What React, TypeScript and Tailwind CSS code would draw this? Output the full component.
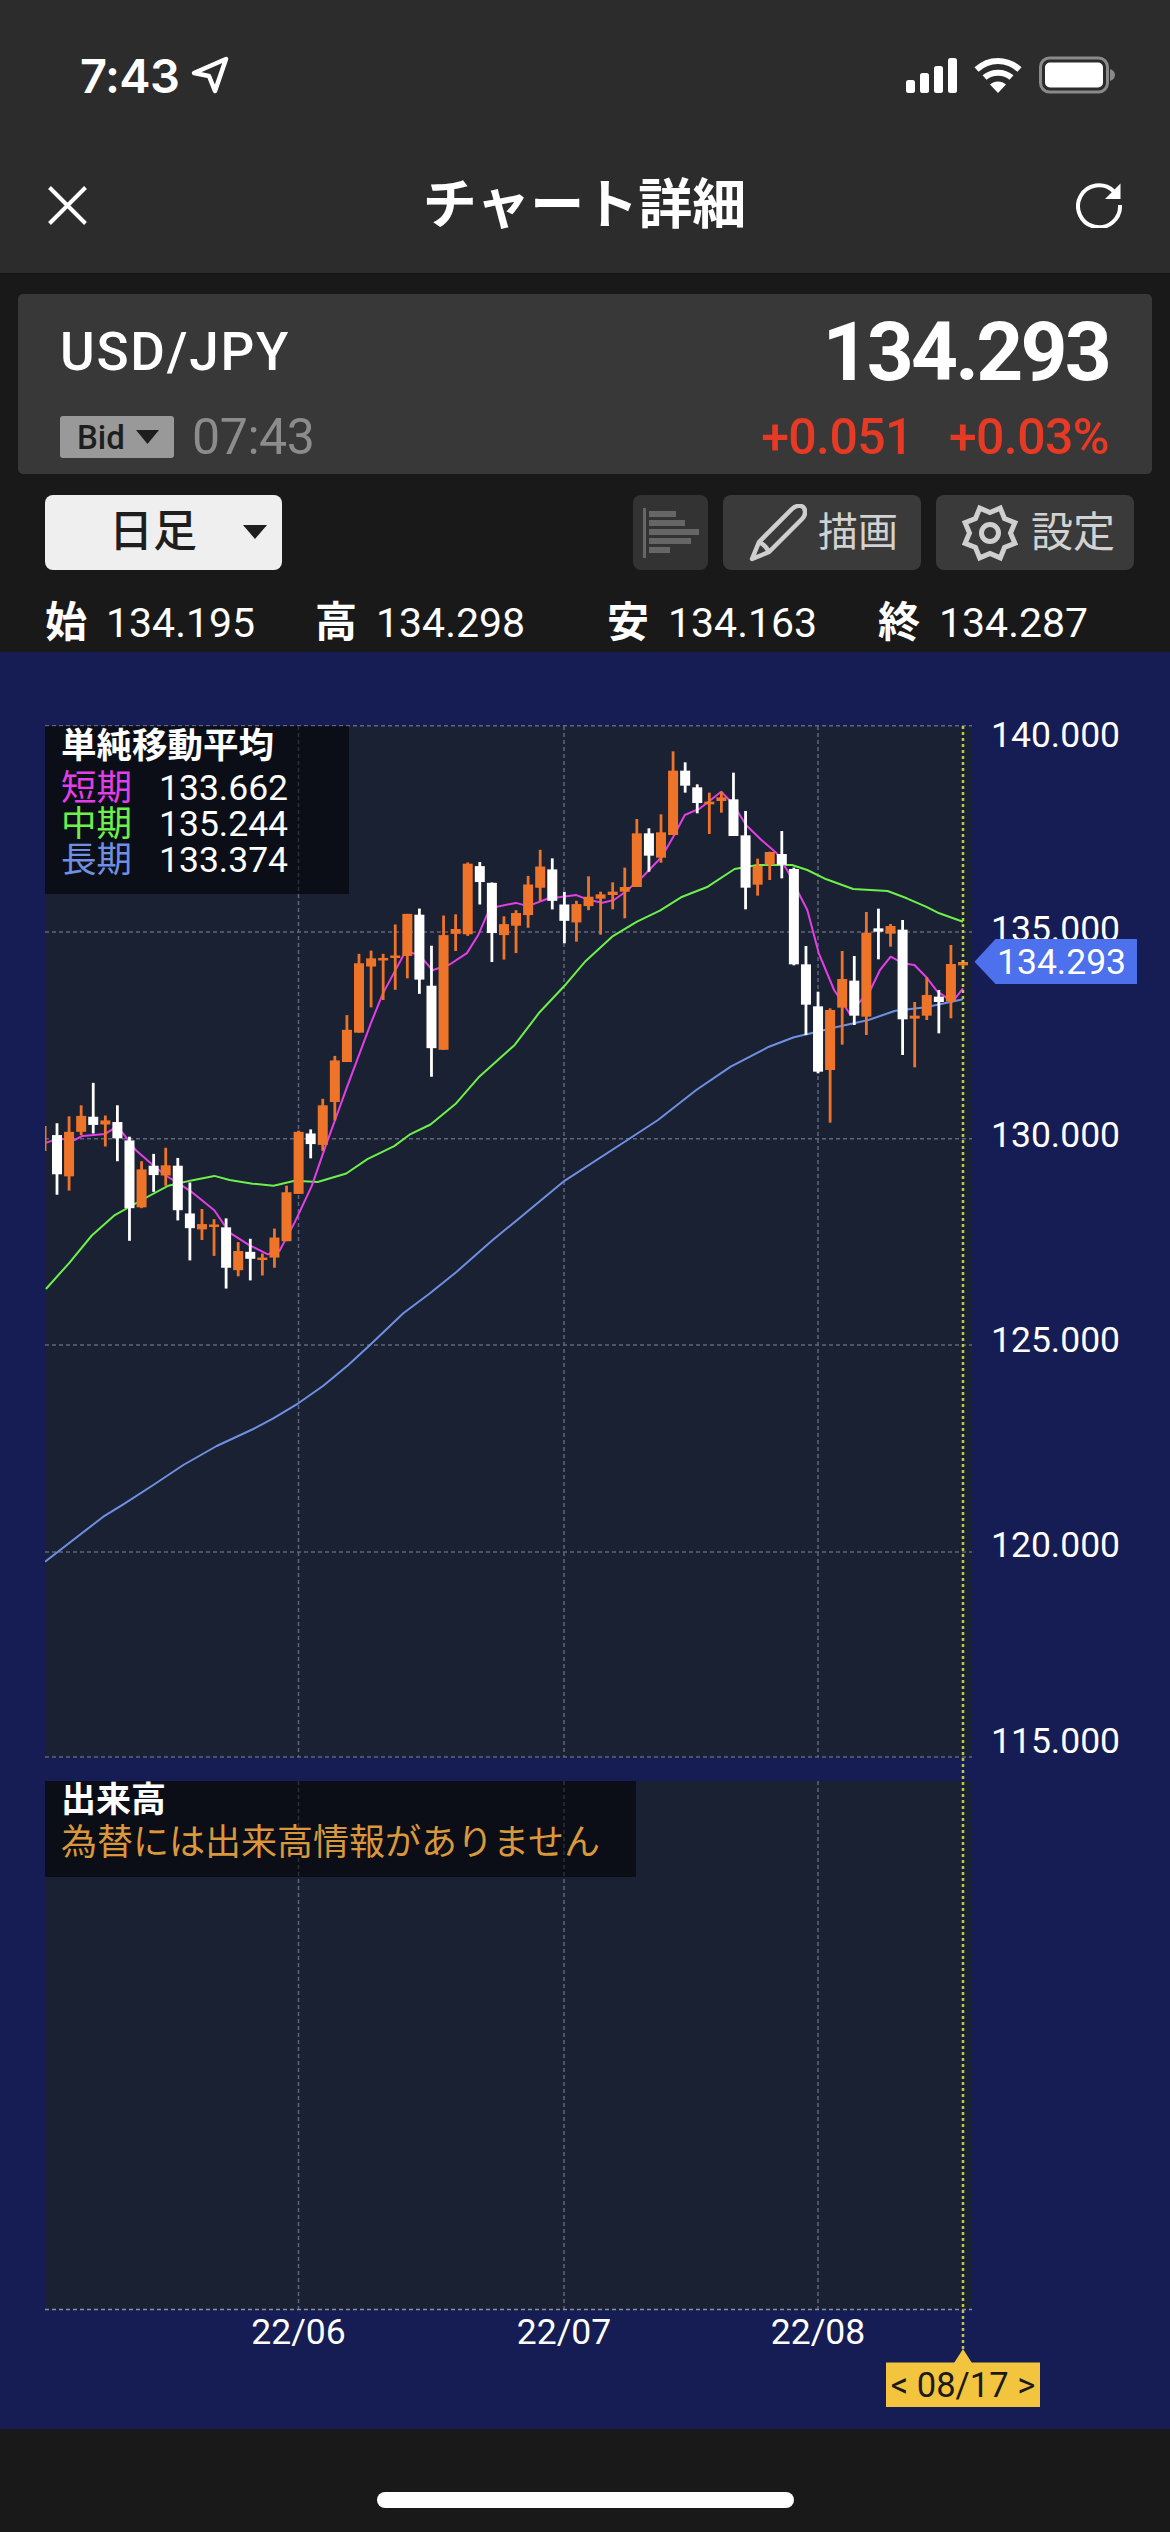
type Pt = [number, number];
// high, body top, body bottom, low, isUp (orange)
type Candle = [number, number, number, number, 0 | 1];

// read off the left part of the chart, scaled below
const leftCandles: Candle[] = [
  [1037, 1066, 1162, 1212, 0], [1020, 1058, 1167, 1202, 1], [993, 1019, 1058, 1066, 1], [938, 1021, 1041, 1062, 0],
  [1018, 1030, 1040, 1094, 1], [993, 1034, 1074, 1130, 0], [1070, 1079, 1245, 1325, 0], [1130, 1150, 1243, 1245, 1],
  [1112, 1141, 1164, 1205, 0], [1097, 1140, 1165, 1190, 1], [1122, 1141, 1250, 1275, 0], [1182, 1258, 1294, 1373, 0],
  [1247, 1284, 1297, 1323, 1], [1272, 1285, 1290, 1362, 1], [1270, 1292, 1391, 1442, 0], [1328, 1350, 1397, 1412, 1],
  [1320, 1352, 1369, 1422, 0], [1356, 1366, 1369, 1410, 1], [1295, 1317, 1366, 1391, 1], [1190, 1206, 1326, 1326, 1],
  [1055, 1058, 1210, 1210, 1], [1052, 1062, 1088, 1123, 0], [977, 993, 1090, 1105, 1], [872, 883, 985, 1030, 1],
  [772, 808, 887, 887, 1], [622, 645, 815, 815, 1], [614, 633, 653, 753, 1], [622, 632, 636, 735, 1],
  [550, 626, 631, 710, 1], [524, 524, 627, 682, 1], [511, 526, 685, 720, 0], [602, 700, 853, 923, 0],
  [528, 576, 857, 857, 1], [525, 561, 573, 615, 1], [398, 401, 574, 578, 1], [397, 407, 446, 501, 0],
  [447, 448, 571, 642, 0], [530, 549, 576, 636, 1], [515, 522, 553, 620, 1], [431, 452, 527, 558, 1],
  [367, 408, 460, 492, 1], [388, 415, 492, 513, 0], [470, 501, 541, 596, 0], [492, 500, 545, 592, 1],
  [432, 482, 505, 515, 1],
];

const rightCandles: Candle[] = [
  [575, 583, 596, 704, 1], [547, 575, 585, 628, 1], [503, 561, 575, 655, 1], [357, 400, 561, 561, 1],
  [385, 400, 467, 515, 0], [343, 397, 473, 488, 1], [154, 212, 405, 405, 1], [187, 212, 257, 278, 0],
  [253, 262, 309, 340, 0], [278, 305, 313, 402, 1], [275, 292, 303, 338, 1], [218, 298, 408, 408, 0],
  [333, 406, 563, 628, 0], [476, 498, 554, 587, 1], [455, 456, 494, 540, 1], [393, 462, 494, 535, 0],
  [503, 507, 793, 796, 0], [738, 793, 914, 1005, 0], [875, 919, 1115, 1120, 0], [925, 930, 1110, 1268, 1],
  [753, 837, 923, 1034, 1], [768, 842, 947, 975, 0], [636, 698, 950, 1005, 1], [626, 685, 695, 778, 0],
  [672, 678, 701, 740, 1], [660, 689, 958, 1065, 0], [906, 947, 956, 1102, 1], [832, 885, 947, 960, 1],
  [870, 890, 906, 1000, 0], [735, 792, 905, 955, 1], [780, 786, 796, 800, 1],
];

const scaleL = (y: number) => 700 + y / 2.45;
const scaleR = (y: number) => 700 + y / 3;
const L = (pts: Pt[]): Pt[] => pts.map(([x, y]) => [x / 2.613, scaleL(y)]);
const R = (pts: Pt[]): Pt[] => pts.map(([x, y]) => [570 + x / 2.613, scaleR(y)]);

const candles = [
  ...leftCandles.map((c) => [c[0], c[1], c[2], c[3]].map(scaleL).concat(c[4])),
  ...rightCandles.map((c) => [c[0], c[1], c[2], c[3]].map(scaleR).concat(c[4])),
];

const shortMa: Pt[] = [
  ...L([[120, 1085], [150, 1075], [195, 1078], [215, 1068], [275, 1063], [300, 1048], [320, 1060], [355, 1103], [400, 1140], [433, 1165], [465, 1183], [500, 1205], [560, 1250], [600, 1305], [650, 1335], [700, 1358], [730, 1350], [770, 1280], [815, 1190], [850, 1095], [906, 950], [970, 790], [1000, 720], [1060, 615], [1096, 625], [1130, 662], [1175, 648], [1220, 620], [1250, 575], [1280, 510], [1348, 497], [1380, 505], [1430, 487], [1506, 478]]),
  ...R([[50, 600], [85, 608], [115, 600], [145, 575], [190, 530], [240, 470], [270, 410], [300, 345], [340, 325], [395, 275], [425, 310], [460, 375], [500, 420], [540, 460], [570, 515], [600, 585], [620, 630], [650, 760], [690, 870], [730, 940], [785, 870], [810, 810], [838, 770], [870, 790], [900, 795], [930, 830], [960, 875], [1000, 905], [1027, 865]]),
];

const midMa: Pt[] = [
  ...L([[120, 1443], [180, 1380], [240, 1312], [300, 1262], [380, 1220], [440, 1190], [500, 1177], [560, 1166], [600, 1176], [660, 1185], [715, 1190], [770, 1178], [830, 1181], [905, 1160], [960, 1125], [1030, 1093], [1070, 1065], [1125, 1040], [1190, 990], [1250, 925], [1345, 845], [1410, 765], [1480, 695], [1530, 640]]),
  ...R([[110, 710], [175, 665], [235, 632], [290, 592], [360, 560], [430, 507], [490, 495], [580, 495], [620, 510], [670, 538], [740, 567], [830, 573], [880, 595], [930, 620], [965, 640], [1027, 665]]),
];

const longMa: Pt[] = [
  ...([[15, 965], [190, 830], [250, 793], [340, 735], [430, 675], [530, 618], [640, 567], [700, 535], [775, 490], [850, 437], [925, 375], [990, 315], [1090, 220], [1170, 160], [1250, 95]] as Pt[]).map(([x, y]): Pt => [40 + x / 3, 1240 + y / 3]),
  ...L([[1285, 1325], [1350, 1275], [1475, 1178]]),
  ...R([[150, 1320], [230, 1260], [330, 1170], [420, 1100], [520, 1040], [585, 1012], [630, 1000], [700, 980], [780, 960], [850, 932], [930, 922], [1027, 898]]),
];

const toPoints = (pts: Pt[]) => pts.map(([x, y]) => `${x.toFixed(1)},${y.toFixed(1)}`).join(' ');

const priceGrid = [725.7, 932, 1138.8, 1345, 1552, 1757];
const dateGrid = [298.5, 564, 818];
const axisLabels = [
  { y: 747, text: '140.000' },
  { y: 941, text: '135.000' },
  { y: 1147, text: '130.000' },
  { y: 1352, text: '125.000' },
  { y: 1557, text: '120.000' },
  { y: 1753, text: '115.000' },
];
const ohlc = [
  { label: '始', value: '134.195' },
  { label: '高', value: '134.298' },
  { label: '安', value: '134.163' },
  { label: '終', value: '134.287' },
];
const maRows = [
  { label: '短期', value: '133.662', color: 'text-[#e23fe6]' },
  { label: '中期', value: '135.244', color: 'text-[#6ef04b]' },
  { label: '長期', value: '133.374', color: 'text-[#6f90e2]' },
];

function StatusBar() {
  return (
    <div className="flex h-[150px] items-center justify-between pl-[80px] pr-[55px]">
      <div className="flex items-center gap-[12px]">
        <span className="font-['Inter',sans-serif] text-[47px] leading-none font-semibold tracking-[-0.6px] text-white">7:43</span>
        <svg width="38" height="38" viewBox="0 0 38 38" fill="none" stroke="white" strokeWidth="4.5" strokeLinejoin="round">
          <path d="M3 17 L35 3 L24 35 L18 20 Z" />
        </svg>
      </div>
      <div className="flex items-center">
        <svg width="51" height="36" viewBox="0 0 51 36" fill="white">
          <rect x="0" y="23" width="9" height="13" rx="2.5" />
          <rect x="14" y="16" width="9" height="20" rx="2.5" />
          <rect x="28" y="9" width="9" height="27" rx="2.5" />
          <rect x="42" y="1" width="9" height="35" rx="2.5" />
        </svg>
        <svg className="ml-[17px]" width="48" height="36" viewBox="0 0 48 36" fill="none" stroke="white" strokeWidth="6">
          <path d="M2.5 12.5 C15 1 33 1 45.5 12.5" />
          <path d="M10.5 20.5 C18 14 30 14 37.5 20.5" />
          <path d="M24 36 L16 27.5 C20.5 23.5 27.5 23.5 32 27.5 Z" fill="white" stroke="none" />
        </svg>
        <svg className="ml-[17px]" width="76" height="38" viewBox="0 0 76 38" fill="none">
          <rect x="1.5" y="2" width="67" height="34" rx="9" stroke="#8a8a8a" strokeWidth="3" />
          <rect x="6" y="6.5" width="58" height="25" rx="5" fill="white" />
          <path d="M71 13 C74 14 76 16 76 19 C76 22 74 24 71 25 Z" fill="#8a8a8a" />
        </svg>
      </div>
    </div>
  );
}

function NavBar() {
  return (
    <div className="flex h-[110px] items-center justify-between pl-[48px] pr-[48px]">
      <svg width="39" height="39" viewBox="0 0 39 39" stroke="white" strokeWidth="4">
        <path d="M1.5 1.5 L37.5 37.5 M37.5 1.5 L1.5 37.5" />
      </svg>
      <h1 className="ml-[6px] pt-[2px] text-[54px] leading-none font-bold text-white">チャート詳細</h1>
      <svg width="46" height="46" viewBox="0 0 46 46" fill="none">
        <path d="M37.5 9 A21 21 0 1 0 44 23" stroke="white" strokeWidth="4" />
        <path d="M44.5 1.5 V17 H29 Z" fill="white" />
      </svg>
    </div>
  );
}

function PricePanel() {
  return (
    <div className="mx-[18px] mt-[20px] flex h-[180px] flex-col rounded-[5px] bg-[#383838] pl-[42px] pr-[43px]">
      <div className="flex h-[110px] items-center justify-between pt-[6px]">
        <span className="text-[53px] leading-none font-medium tracking-[1.8px] text-white">USD/JPY</span>
        <span className="text-[82px] leading-none font-bold tracking-[-2.8px] text-white">134.293</span>
      </div>
      <div className="flex flex-1 items-center justify-between pb-[4px]">
        <div className="flex items-center">
          <div className="flex h-[42px] w-[114px] items-center rounded-[3px] bg-[#999999] pl-[17px]">
            <span className="text-[33px] leading-none font-medium text-[#1e1e1e]">Bid</span>
            <svg className="ml-[11px]" width="23" height="14" viewBox="0 0 23 14" fill="#1e1e1e"><path d="M0 0 H23 L11.5 14 Z" /></svg>
          </div>
          <span className="ml-[18px] text-[50px] leading-none tracking-[-0.4px] text-[#8c8c8c]">07:43</span>
        </div>
        <div className="flex items-center gap-[36px] text-[50px] leading-none font-medium tracking-[-0.6px] text-[#e63a25]">
          <span>+0.051</span>
          <span>+0.03%</span>
        </div>
      </div>
    </div>
  );
}

function Toolbar() {
  return (
    <div className="mt-[21px] flex h-[75px] pl-[45px] pr-[36px]">
      <div className="relative flex w-[237px] items-center rounded-[8px] bg-[#efefef] pl-[64px]">
        <span className="pb-[2px] text-[44px] leading-none font-medium text-[#1e1e1e]">日足</span>
        <svg className="absolute left-[198px] top-[30px]" width="24" height="14" viewBox="0 0 24 14" fill="#1e1e1e"><path d="M0 0 H24 L12 14 Z" /></svg>
      </div>
      <div className="ml-auto flex gap-[15px]">
        <div className="flex w-[75px] items-center justify-center rounded-[8px] bg-[#333333]">
          <svg width="56" height="50" viewBox="0 0 56 50" fill="#666666">
            <rect x="0" y="0" width="3" height="50" />
            <rect x="6" y="3" width="27" height="6" />
            <rect x="6" y="12" width="36" height="6" />
            <rect x="6" y="21" width="51" height="6" />
            <rect x="6" y="30" width="42" height="6" />
            <rect x="6" y="39" width="21" height="6" />
          </svg>
        </div>
        <div className="flex w-[198px] items-center rounded-[8px] bg-[#3a3a3a] pl-[26px]">
          <svg width="58" height="58" viewBox="0 0 58 58" fill="none" stroke="#cfcfcf" strokeWidth="4.5" strokeLinejoin="round">
            <path d="M3 55 L10 38 L43 5 C47 1 53 1 55 4 C57 8 56 12 53 15 L20 48 Z" />
            <path d="M10 38 C14 40 18 44 20 48" />
          </svg>
          <span className="ml-[11px] text-[40px] leading-none text-[#d2d2d2]">描画</span>
        </div>
        <div className="flex w-[198px] items-center rounded-[8px] bg-[#3a3a3a] pl-[25px]">
          <svg width="58" height="60" viewBox="0 0 58 60" fill="none" stroke="#cfcfcf" strokeWidth="5" strokeLinejoin="miter">
            <path d="M29 9.5 L39.3 5.1 L43.5 15.5 L53.9 19.7 L49.5 30 L53.9 40.3 L43.5 44.5 L39.3 54.9 L29 50.5 L18.7 54.9 L14.5 44.5 L4.1 40.3 L8.5 30 L4.1 19.7 L14.5 15.5 L18.7 5.1 Z" />
            <circle cx="29" cy="30" r="8.5" />
          </svg>
          <span className="ml-[12px] text-[42px] leading-none text-[#d2d2d2]">設定</span>
        </div>
      </div>
    </div>
  );
}

function OhlcRow() {
  return (
    <div className="grid h-[82px] grid-cols-[270px_292px_271px_1fr] items-center pl-[45px] pt-[24px]">
      {ohlc.map((item) => (
        <div key={item.label} className="flex items-center gap-[19px] text-white">
          <span className="text-[42px] leading-none font-bold">{item.label}</span>
          <span className="text-[41px] leading-none">{item.value}</span>
        </div>
      ))}
    </div>
  );
}

function ChartDrawing() {
  return (
    <svg className="absolute left-0 top-0" width="1170" height="1777" viewBox="0 652 1170 1777" fontFamily="Roboto, sans-serif">
      <defs>
        <clipPath id="plot">
          <rect x="45" y="725" width="930" height="1032" />
        </clipPath>
      </defs>
      <g stroke="#5f667b" strokeWidth="1.5" strokeDasharray="4 3">
        {priceGrid.map((y) => (
          <line key={y} x1="45" x2="972" y1={y} y2={y} />
        ))}
        {dateGrid.map((x) => (
          <g key={x}>
            <line x1={x} x2={x} y1="726" y2="1757" />
            <line x1={x} x2={x} y1="1781" y2="2309" />
          </g>
        ))}
        <line x1="45" x2="972" y1="2309.5" y2="2309.5" stroke="#8a90a5" />
      </g>
      <g clipPath="url(#plot)" strokeLinejoin="round">
        <polyline points={toPoints(longMa)} fill="none" stroke="#6f90e2" strokeWidth="2" />
        <polyline points={toPoints(midMa)} fill="none" stroke="#6ef04b" strokeWidth="2" />
        <polyline points={toPoints(shortMa)} fill="none" stroke="#e23fe6" strokeWidth="2" />
        <line x1="45" x2="45" y1="1126" y2="1151" stroke="#ee7429" strokeWidth="3" />
        {candles.map(([high, top, bottom, low, up], i) => {
          const x = 57 + i * 12.08;
          const color = up ? '#ee7429' : '#ffffff';
          return (
            <g key={i} fill={color}>
              <rect x={x - 1.4} y={high} width="2.8" height={low - high} />
              <rect x={x - 5} y={top} width="10" height={Math.max(bottom - top, 2.5)} />
            </g>
          );
        })}
      </g>
      <line x1="963" x2="963" y1="726" y2="2352" stroke="#c4c744" strokeWidth="2.5" strokeDasharray="3 3" />
      <g fill="white" fontSize="35.5">
        {axisLabels.map((label) => (
          <text key={label.text} x="991" y={label.y}>{label.text}</text>
        ))}
        {dateGrid.map((x, i) => (
          <text key={x} x={x} y="2344" textAnchor="middle">{['22/06', '22/07', '22/08'][i]}</text>
        ))}
      </g>
      <polygon points="974.5,961.7 995.5,939 1137,939 1137,984 995.5,984" fill="#4d70ec" />
      <text x="997" y="973.5" fill="white" fontSize="35.5">134.293</text>
      <polygon points="963,2349 972,2363 954,2363" fill="#f3c53e" />
      <rect x="886" y="2362.5" width="154" height="44.5" fill="#f3c53e" />
      <text x="963" y="2397" fill="#1a1a1a" fontSize="34.5" textAnchor="middle">{'< 08/17 >'}</text>
    </svg>
  );
}

function Chart() {
  return (
    <div className="relative h-[1777px] bg-[#161d54] pl-[45px] pt-[74px]">
      <div className="h-[1031px] w-[927px] bg-[#192133]" />
      <div className="mt-[24px] h-[529px] w-[927px] bg-[#192133]" />
      <ChartDrawing />
      <div className="absolute left-[45px] top-[74px] h-[168px] w-[304px] bg-black/55 pl-[16px] pt-[1px]">
        <p className="text-[35.5px] leading-[38px] font-bold text-white">単純移動平均</p>
        <div className="mt-[6px]">
          {maRows.map((row) => (
            <div key={row.label} className="flex h-[36px] items-center text-[35.5px] leading-none">
              <span className={`w-[98px] ${row.color}`}>{row.label}</span>
              <span className="text-white">{row.value}</span>
            </div>
          ))}
        </div>
      </div>
      <div className="absolute left-[45px] top-[1129px] h-[96px] w-[591px] bg-black/55 pl-[16px]">
        <p className="text-[35px] leading-[40px] font-bold text-white">出来高</p>
        <p className="text-[36px] leading-[44px] text-[#d9983c]">為替には出来高情報がありません</p>
      </div>
    </div>
  );
}

export default function App() {
  return (
    <div className="flex h-[2532px] w-[1170px] flex-col overflow-hidden bg-[#191919] font-['Roboto','Noto_Sans_CJK_JP',sans-serif]">
      <header className="h-[274px] border-b border-[#141414] bg-[#2c2c2c]">
        <StatusBar />
        <NavBar />
      </header>
      <PricePanel />
      <Toolbar />
      <OhlcRow />
      <Chart />
      <div className="flex flex-1 justify-center pt-[63px]">
        <div className="h-[16px] w-[417px] rounded-full bg-white" />
      </div>
    </div>
  );
}
